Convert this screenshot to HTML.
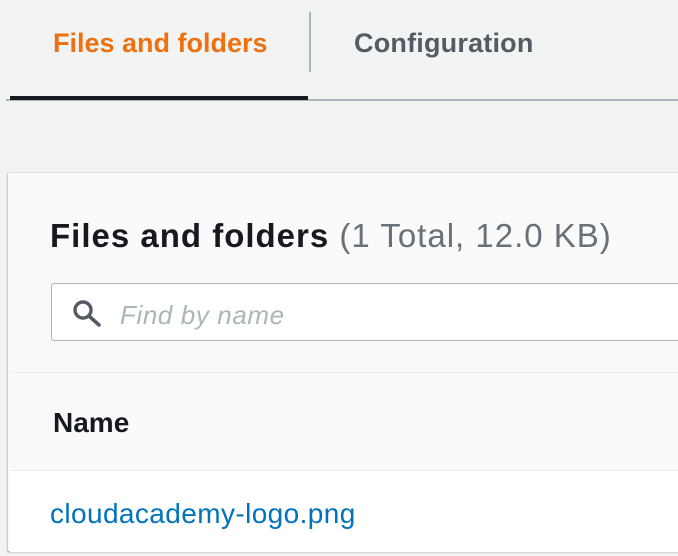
<!DOCTYPE html>
<html><head><style>
body{margin:0;width:678px;height:556px;background:#f2f3f3;font-family:"Liberation Sans",sans-serif;position:relative;overflow:hidden}
.a{position:absolute;white-space:nowrap}
</style></head><body>
<div class="a" style="left:53px;top:28px;font-size:27px;font-weight:bold;color:#ec7211">Files and folders</div>
<div class="a" style="left:309px;top:12px;width:2px;height:60px;background:#aab7b8"></div>
<div class="a" style="left:354px;top:28px;font-size:27px;letter-spacing:0.2px;font-weight:bold;color:#545b64">Configuration</div>
<div class="a" style="left:6px;top:99px;width:672px;height:2px;background:#aab7b8"></div>
<div class="a" style="left:10px;top:96px;width:298px;height:4px;background:#16191f"></div>
<div class="a" style="left:8px;top:173px;width:680px;height:378px;background:#fafafa;box-shadow:0 1px 2px rgba(0,28,36,.4),0 0 1px rgba(0,28,36,.3)"></div>
<div class="a" style="left:50px;top:217px;font-size:33px;letter-spacing:1px;color:#16191f"><b>Files and folders</b> <span style="color:#687078">(1 Total, 12.0 KB)</span></div>
<div class="a" style="left:51px;top:283px;width:640px;height:56px;border:1px solid #aab7b8;border-radius:3px;background:#fff"></div>
<svg class="a" style="left:71px;top:299px" width="32" height="30" viewBox="0 0 32 30"><circle cx="12" cy="11" r="8" fill="none" stroke="#545b64" stroke-width="3.4"/><line x1="18" y1="17" x2="28" y2="26" stroke="#545b64" stroke-width="3.6" stroke-linecap="round"/></svg>
<div class="a" style="left:120px;top:300px;font-size:26px;letter-spacing:0.6px;font-style:italic;color:#aab7b8">Find by name</div>
<div class="a" style="left:10px;top:372px;width:680px;height:1px;background:#eaeded"></div>
<div class="a" style="left:53px;top:407px;font-size:28px;font-weight:bold;color:#16191f">Name</div>
<div class="a" style="left:10px;top:470px;width:680px;height:81px;background:#fff;border-top:1px solid #eaeded"></div>
<div class="a" style="left:50px;top:498px;font-size:28px;letter-spacing:0.4px;color:#0073bb">cloudacademy-logo.png</div>
</body></html>
